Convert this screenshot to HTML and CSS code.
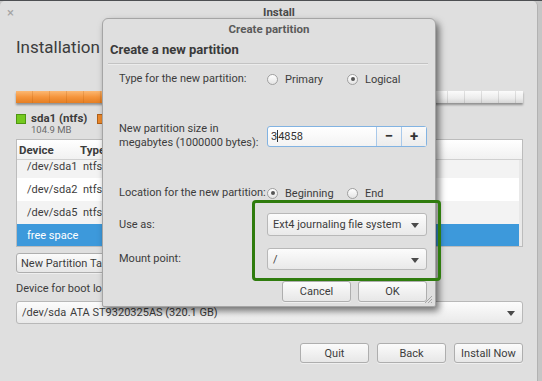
FILE: index.html
```html
<!DOCTYPE html><html><head><meta charset="utf-8">
<title>Install</title>
<link rel="stylesheet" href="styles.css">
</head><body>

<div class="win">
<div class="wbar"><span class="wclose">×</span><span class="wtitle">Install</span></div>
<div class="wbody">
<h1>Installation type</h1>

<div class="pbar"><div class="pfill"></div><div class="pfree"></div></div>

<div class="legend">
	<div class="litem"><span class="sw green"></span><div><b>sda1 (ntfs)</b><small>104.9 MB</small></div></div>
	<div class="litem"><span class="sw orange"></span></div>
</div>

<div class="ptable">
	<div class="phead"><span class="c1">Device</span><span>Type</span></div>
	<div class="prows">
		<div class="prow alt first"><span class="c1">/dev/sda1</span><span>ntfs</span></div>
		<div class="prow"><span class="c1">/dev/sda2</span><span>ntfs</span></div>
		<div class="prow alt"><span class="c1">/dev/sda5</span><span>ntfs</span></div>
		<div class="prow sel"><span class="c1">free space</span><span></span></div>
	</div>
</div>

<div class="npt"><button class="btn wbtn">New Partition Table...</button></div>
<div class="blabel">Device for boot loader installation:</div>
<div class="combo boot"><span class="dev">/dev/sda</span><span>ATA ST9320325AS (320.1 GB)</span><i class="arr"></i></div>

<div class="actions">
	<button class="btn">Quit</button>
	<button class="btn">Back</button>
	<button class="btn">Install Now</button>
</div>
</div>
</div>

<!-- dialog over the installer window -->
<div class="dlg">
	<div class="dbar">Create partition</div>
	<div class="dbody">
		<div class="dhead">Create a new partition</div>
		<div class="dsep"></div>
		<div class="frow r-type">
			<span class="flabel">Type for the new partition:</span>
			<div class="fctl radios">
				<span class="radio"><i></i>Primary</span>
				<span class="radio on"><i></i>Logical</span>
			</div>
		</div>
		<div class="frow r-size">
			<span class="flabel">New partition size in<br>megabytes (1000000 bytes):</span>
			<div class="fctl spin">
				<span class="sval">3<em class="caret"></em>4858</span>
				<span class="sbtn">−</span>
				<span class="sbtn">+</span>
			</div>
		</div>
		<div class="frow r-loc">
			<span class="flabel">Location for the new partition:</span>
			<div class="fctl radios">
				<span class="radio on"><i></i>Beginning</span>
				<span class="radio"><i></i>End</span>
			</div>
		</div>
		<div class="frow r-use">
			<span class="flabel">Use as:</span>
			<div class="fctl combo">Ext4 journaling file system<i class="arr"></i></div>
		</div>
		<div class="frow r-mount">
			<span class="flabel">Mount point:</span>
			<div class="fctl combo">/<i class="arr"></i></div>
		</div>
		<div class="dbtns">
			<button class="btn">Cancel</button>
			<button class="btn">OK</button>
		</div>
	</div>
	<svg class="grip" width="9" height="9" viewBox="0 0 9 9"><path d="M8 1L1 8M8 4L4 8M8 7L7 8" stroke="#a6a6a6" stroke-width="1"/></svg>
</div>

<div class="hilite"></div>

</body></html>
```

FILE: styles.css
```css
body {
	margin: 0;
	height: 381px;
	overflow: hidden;
	position: relative;
	background: linear-gradient(#4d4f52 0 1px, #c6c6c6 1px);
	font-family: Roboto, "Liberation Sans", sans-serif;
	font-size: 11px;
	color: #3c3c3c;
}
button {
	font-family: inherit;
	font-size: 11px;
	color: #3c3c3c;
}

/* installer window */
.win {
	box-sizing: border-box;
	width: 538px;
	height: 380px;
	margin-top: 1px;
	background: #dfdfdf;
	border-right: 1px solid #b2b2b2;
	border-radius: 5px 5px 0 0;
}
.wbar {
	height: 22px;
	display: flex;
	align-items: center;
	padding-left: 7px;
}
.wclose {
	width: 10px;
	color: #a3a3a3;
	font-size: 13px;
	line-height: 13px;
}
.wtitle {
	flex: 1;
	text-align: center;
	padding-left: 4px;
	font-weight: bold;
	color: #4a4a4a;
	font-size: 11.5px;
}
.wbody {
	padding: 0 14px 0 16px;
}
h1 {
	margin: 14px 0 0;
	font-size: 17px;
	line-height: 20px;
	font-weight: normal;
	color: #3c3c3c;
}

.pbar {
	margin-top: 34px;
	height: 12px;
	display: flex;
	box-shadow: 0 2px 2px rgba(0,0,0,.35);
}
.pfill {
	width: 330px;
	background:
		repeating-linear-gradient(90deg, transparent 0 16px, rgba(170,80,0,.2) 16px 17px),
		linear-gradient(#fcb872, #f5953c 50%, #e57e22);
}
.pfree {
	flex: 1;
	background:
		repeating-linear-gradient(90deg, transparent 0 16px, rgba(0,0,0,.1) 16px 17px),
		linear-gradient(#fbfbfb, #ececec 60%, #d6d6d6);
}

.legend {
	margin-top: 10px;
	height: 21px;
	display: flex;
}
.litem {
	width: 81px;
	display: flex;
	gap: 5px;
}
.sw {
	box-sizing: border-box;
	width: 10px;
	height: 10px;
	margin-top: 1px;
}
.green { background: #74c91f; border: 1px solid #4f9612; }
.orange { background: #ee8a2c; border: 1px solid #b1611a; }
.litem b {
	display: block;
	font-size: 11.5px;
	line-height: 11px;
}
.litem small {
	display: block;
	margin-top: 1px;
	font-size: 9.5px;
	line-height: 10px;
	color: #6a6a6a;
}

.ptable {
	margin-top: 5px;
	border: 1px solid #bcbcbc;
	background: #fff;
}
.phead {
	height: 19px;
	display: flex;
	align-items: center;
	padding-left: 2px;
	font-weight: bold;
	font-size: 11.5px;
	background: linear-gradient(#ffffff, #f1f1f1);
	border-bottom: 1px solid #d0d0d0;
}
.phead .c1 { flex: none; width: 61px; }
.prows {
	height: 86px;
	overflow: hidden;
	border-right: 3px solid #e9e9e9;
}
.prow {
	height: 23px;
	display: flex;
	align-items: center;
	padding-left: 10px;
}
.prow .c1 { flex: none; width: 56px; }
.prow.first { margin-top: -5px; }
.alt { background: #f3f3f3; }
.sel { background: #3d99db; color: #fff; }

.btn {
	box-sizing: border-box;
	height: 20px;
	padding: 0 6px;
	border: 1px solid #aeaeae;
	border-radius: 3px;
	background: linear-gradient(#fbfbfb, #e7e7e7);
	box-shadow: 0 1px 0 rgba(255,255,255,.5);
}
.npt { margin-top: 6px; }
.wbtn { width: 130px; text-align: left; padding-left: 4px; }
.blabel {
	margin-top: 9px;
	line-height: 14px;
}
.combo {
	box-sizing: border-box;
	height: 23px;
	display: flex;
	align-items: center;
	padding-left: 5px;
	border: 1px solid #b8b8b8;
	border-radius: 3px;
	background: linear-gradient(#fcfcfc, #e9e9e9);
	position: relative;
}
.boot { margin-top: 5px; }
.dev { width: 48px; }
.arr {
	position: absolute;
	right: 7px;
	top: 9px;
	border-left: 4px solid transparent;
	border-right: 4px solid transparent;
	border-top: 5px solid #4a4a4a;
}
.actions {
	margin-top: 19px;
	display: flex;
	justify-content: flex-end;
	gap: 8px;
}
.actions .btn { width: 69px; }

/* create partition dialog */
.dlg {
	position: absolute;
	left: 102px;
	top: 18px;
	box-sizing: border-box;
	width: 334px;
	height: 289px;
	background: #dfdfdf;
	border: 1px solid #a5a5a5;
	border-radius: 6px 6px 2px 2px;
	box-shadow: 3px 4px 7px rgba(0,0,0,.55);
}
.dbar {
	height: 21px;
	line-height: 21px;
	text-align: center;
	font-weight: bold;
	font-size: 11.5px;
	color: #5a5a5a;
}
.dbody {
	padding: 0 7px 0 5px;
}
.dhead {
	margin-top: 2px;
	padding-left: 2px;
	font-size: 13px;
	line-height: 16px;
	font-weight: bold;
	color: #3a3a3a;
}
.dsep {
	margin-top: 5px;
	height: 1px;
	background: #c3c3c3;
	border-bottom: 1px solid #ececec;
}
.frow {
	display: flex;
	align-items: center;
	padding-left: 11px;
}
.flabel {
	flex: none;
	width: 148px;
	line-height: 14px;
}
.fctl {
	flex: none;
	width: 160px;
}
.r-type { margin-top: 4px; height: 20px; }
.r-size { margin-top: 32px; height: 30px; }
.r-loc { margin-top: 32px; height: 20px; }
.r-use { margin-top: 10px; height: 23px; }
.r-mount { margin-top: 12px; height: 22px; }
.r-mount .combo { height: 22px; }

.radios { display: flex; }
.radio {
	width: 95px;
	display: flex;
	align-items: center;
	gap: 7px;
}
.radio i {
	box-sizing: border-box;
	width: 11px;
	height: 11px;
	border: 1px solid #a0a0a0;
	border-radius: 50%;
	background: linear-gradient(#ffffff, #e4e4e4);
	display: flex;
	align-items: center;
	justify-content: center;
}
.radio.on i::after {
	content: "";
	width: 4px;
	height: 4px;
	border-radius: 50%;
	background: #555;
}

.spin {
	box-sizing: border-box;
	height: 21px;
	display: flex;
	border: 1px solid #82b3e2;
	border-radius: 3px;
	background: linear-gradient(#ffffff, #f3f3f3);
}
.sval {
	flex: 1;
	padding-left: 3px;
	display: flex;
	align-items: center;
	color: #333;
}
.caret {
	width: 1px;
	height: 12px;
	background: #333;
}
.sbtn {
	width: 24px;
	border-left: 1px solid #a9c9ea;
	display: flex;
	align-items: center;
	justify-content: center;
	font-size: 15px;
	font-weight: bold;
	color: #333;
	background: linear-gradient(#fafafa, #ececec);
}
.dbtns {
	margin-top: 11px;
	display: flex;
	justify-content: flex-end;
	gap: 7px;
	padding-right: 1px;
}
.dbtns .btn { width: 69px; height: 21px; }
.grip {
	position: absolute;
	right: 2px;
	bottom: 2px;
}

/* green highlight drawn over the screenshot */
.hilite {
	position: absolute;
	left: 252px;
	top: 200px;
	box-sizing: border-box;
	width: 189px;
	height: 81px;
	border: 3px solid #2f7c0e;
	border-radius: 4px;
}
```
